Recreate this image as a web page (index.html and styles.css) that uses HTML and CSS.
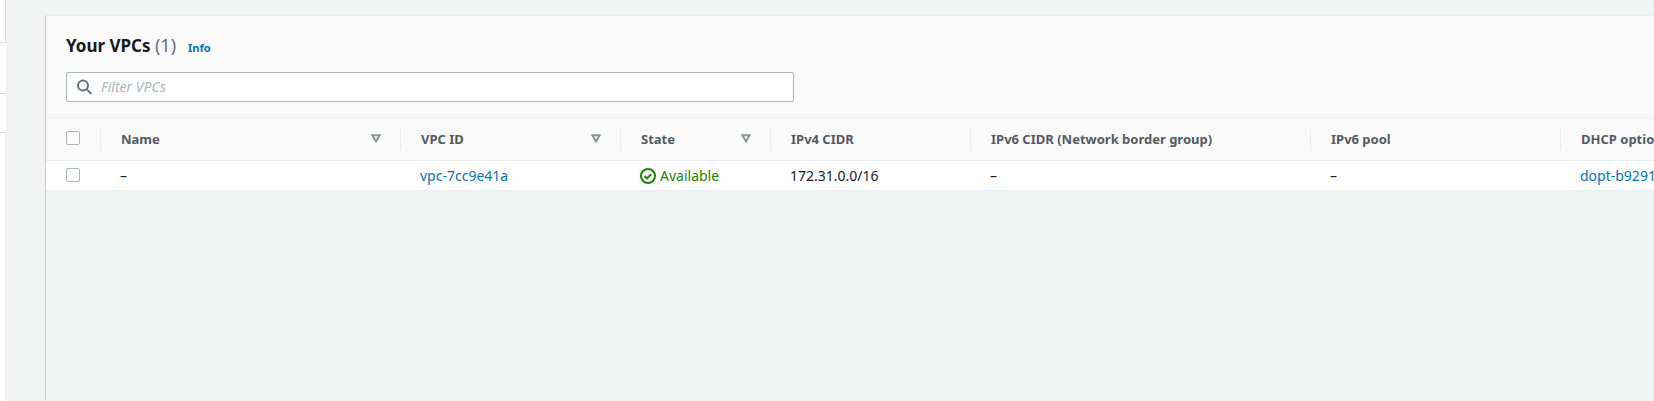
FILE: index.html
```html
<!DOCTYPE html>
<html lang="en">
<head>
<meta charset="utf-8">
<title>Your VPCs</title>
<link rel="stylesheet" href="styles.css">
</head>
<body>
<div class="app">
  <aside class="rail">
    <div class="rail-box rail-top"></div>
    <div class="rail-box rail-middle"></div>
    <div class="rail-box rail-lower"></div>
    <div class="rail-rest"></div>
  </aside>
  <main class="panel">
    <header class="panel-header">
      <div class="title-row">
        <h1 class="title">Your VPCs <span class="count">(1)</span></h1>
        <a class="info" href="#">Info</a>
      </div>
      <label class="search">
        <svg class="search-icon" viewBox="0 0 16 16" aria-hidden="true"><circle cx="6" cy="6.5" r="5"/><path d="M9.6 10.1l4.8 4.8"/></svg>
        <input class="search-input" type="text" placeholder="Filter VPCs" aria-label="Filter VPCs">
      </label>
    </header>
    <table class="grid">
      <colgroup>
        <col class="col-select"><col class="col-name"><col class="col-id"><col class="col-state"><col class="col-ipv4"><col class="col-ipv6"><col class="col-pool"><col class="col-dhcp">
      </colgroup>
      <thead>
        <tr>
          <th><div class="head"><input class="check" type="checkbox" aria-label="Select all VPCs"></div></th>
          <th><div class="head">Name <svg class="sort" viewBox="0 0 10 9" aria-hidden="true"><path d="M1.3 1.2h7.4L5 7.3z"/></svg></div></th>
          <th><div class="head">VPC ID <svg class="sort" viewBox="0 0 10 9" aria-hidden="true"><path d="M1.3 1.2h7.4L5 7.3z"/></svg></div></th>
          <th><div class="head">State <svg class="sort" viewBox="0 0 10 9" aria-hidden="true"><path d="M1.3 1.2h7.4L5 7.3z"/></svg></div></th>
          <th><div class="head">IPv4 CIDR</div></th>
          <th><div class="head">IPv6 CIDR (Network border group)</div></th>
          <th><div class="head">IPv6 pool</div></th>
          <th><div class="head">DHCP options set</div></th>
        </tr>
      </thead>
      <tbody>
        <tr>
          <td class="cell-select"><input class="check" type="checkbox" aria-label="Select vpc-7cc9e41a"></td>
          <td>–</td>
          <td><a href="#">vpc-7cc9e41a</a></td>
          <td><span class="status"><svg class="status-icon" viewBox="0 0 16 16" aria-hidden="true"><circle cx="8" cy="8" r="7"/><path d="M4.6 8l2.4 2.4 4.3-4.3"/></svg>Available</span></td>
          <td>172.31.0.0/16</td>
          <td>–</td>
          <td>–</td>
          <td><a href="#">dopt-b9291</a></td>
        </tr>
      </tbody>
    </table>
  </main>
</div>
</body>
</html>
```
FILE: styles.css
```css
* { box-sizing: border-box; }
body {
  margin: 0;
  background: #f2f3f3;
  color: #16191f;
  font: 14px/20px "Noto Sans", "Open Sans", sans-serif;
}
a { color: #0073bb; text-decoration: none; }
.app { display: flex; min-height: 100vh; overflow: hidden; }

.rail { display: flex; flex-direction: column; flex: none; width: 6px; }
.rail-box { background: #fff; border-bottom: 1px solid #d5dbdb; }
.rail-top { height: 43px; border-right: 1px solid #d5dbdb; }
.rail-middle { height: 51px; }
.rail-lower { height: 39px; }
.rail-rest { flex: 1; background: #fff; border-right: 1px solid #eff1f1; }

.panel {
  flex: 1;
  min-width: 0;
  margin: 15px 0 0 39px;
  overflow: hidden;
  border-left: 1px solid #c5cbcb;
  border-top: 1px solid #eaeded;
}
.panel-header { padding: 15px 20px; background: #fafafa; border-bottom: 1px solid #eaeded; }
.title-row { display: flex; align-items: baseline; gap: 12px; margin-bottom: 10px; line-height: 28px; }
.title { margin: 0; font-size: 17px; font-weight: 700; }
.count { color: #687078; font-size: 18px; font-weight: 400; }
.info { font-size: 11px; font-weight: 700; }
.search {
  display: flex;
  align-items: center;
  gap: 8px;
  max-width: 728px;
  height: 30px;
  padding: 0 10px;
  background: #fff;
  border: 1px solid #aab7b8;
  border-radius: 2px;
}
.search-icon { flex: none; width: 16px; height: 16px; fill: none; stroke: #687078; stroke-width: 2; }
.search-input { flex: 1; min-width: 0; padding: 0; border: 0; outline: 0; background: none; color: #16191f; font: inherit; }
.search-input::placeholder { color: #aab7b8; font-style: italic; opacity: 1; }

.grid { width: 100%; min-width: 1708px; table-layout: fixed; border-collapse: separate; border-spacing: 0; }
.col-select { width: 55px; }
.col-name { width: 300px; }
.col-id { width: 220px; }
.col-state { width: 150px; }
.col-ipv4 { width: 200px; }
.col-ipv6 { width: 340px; }
.col-pool { width: 250px; }
.grid th { padding: 11px 0 10px; background: #fafafa; border-bottom: 1px solid #eaeded; text-align: left; }
.head {
  display: flex;
  align-items: center;
  justify-content: space-between;
  height: 21px;
  padding: 0 19px 2px 20px;
  border-right: 1px solid #eaeded;
  color: #545b64;
  font-size: 13px;
  white-space: nowrap;
}
.grid td { height: 30px; padding: 0 19px; background: #fff; border-bottom: 1px solid #eaeded; white-space: nowrap; }
.grid .cell-select { padding: 0 20px; }
.sort { width: 10px; height: 9px; fill: none; stroke: #879596; stroke-width: 2; }
.check {
  appearance: none;
  display: block;
  width: 14px;
  height: 14px;
  margin: 0 0 2px;
  background: #fff;
  border: 1px solid #aab7b8;
  border-radius: 2px;
}
.check:checked { background: #0073bb; }
.status { display: flex; align-items: center; gap: 4px; color: #1d8102; }
.status-icon { width: 16px; height: 16px; fill: none; stroke: currentColor; stroke-width: 2; }
```
